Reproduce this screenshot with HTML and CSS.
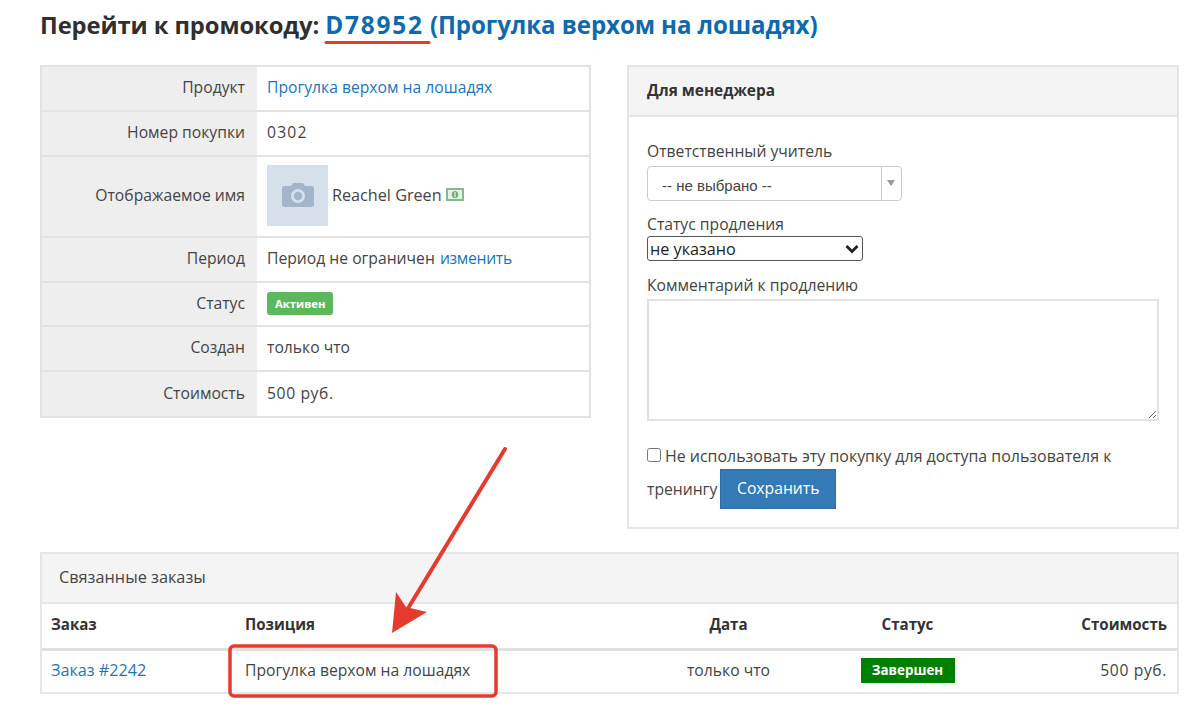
FILE: index.html
```html
<!DOCTYPE html>
<html lang="ru">
<head>
<meta charset="utf-8">
<title>Покупка</title>
<link rel="stylesheet" href="styles.css">
</head>
<body>
<main class="page">
  <h1 class="title">Перейти к промокоду: <a href="#" class="code">D78952</a> <a href="#" class="title-name">(Прогулка верхом на лошадях)</a></h1>
  <div class="columns">
    <table class="info">
      <tr class="r45"><th>Продукт</th><td><a href="#">Прогулка верхом на лошадях</a></td></tr>
      <tr class="r45"><th>Номер покупки</th><td class="num">0302</td></tr>
      <tr class="r81"><th>Отображаемое имя</th><td>
        <div class="user">
          <div class="avatar">
            <svg width="32" height="24" viewBox="0 0 32 24"><path fill="#a3b5c8" d="M3 3h6l2-3h10l2 3h6a3 3 0 0 1 3 3v15a3 3 0 0 1-3 3H3a3 3 0 0 1-3-3V6a3 3 0 0 1 3-3z"/><circle cx="16" cy="13" r="7" fill="#d5e0eb"/><circle cx="16" cy="13" r="4.2" fill="#a3b5c8"/></svg>
          </div>
          <span class="name">Reachel Green</span>
          <svg class="money" width="18" height="13" viewBox="0 0 18 13"><rect width="18" height="13" fill="#86bd86"/><rect x="2" y="2" width="14" height="9" fill="#e8f3e8"/><ellipse cx="9" cy="6.5" rx="3.2" ry="3.6" fill="#6fae6f"/><rect x="8.4" y="4" width="1.2" height="5" fill="#e8f3e8"/></svg>
        </div>
      </td></tr>
      <tr class="r45"><th>Период</th><td>Период не ограничен <a href="#" class="change">изменить</a></td></tr>
      <tr class="r44"><th>Статус</th><td><span class="badge">Активен</span></td></tr>
      <tr class="r45"><th>Создан</th><td>только что</td></tr>
      <tr class="r46"><th>Стоимость</th><td class="num-soft">500 руб.</td></tr>
    </table>

    <section class="panel manager">
      <header class="panel-head strong">Для менеджера</header>
      <form class="panel-body">
        <label class="lbl">Ответственный учитель</label>
        <div class="combo"><span class="combo-text">-- не выбрано --</span><span class="combo-arrow"></span></div>
        <label class="lbl lbl2">Статус продления</label>
        <select class="native"><option>не указано</option></select>
        <label class="lbl lbl3">Комментарий к продлению</label>
        <textarea class="area"></textarea>
        <div class="check-line"><input type="checkbox" class="check"><span>Не использовать эту покупку для доступа пользователя к</span></div>
        <div class="save-line"><span>тренингу</span><button type="button" class="save">Сохранить</button></div>
      </form>
    </section>
  </div>

  <section class="panel orders">
    <header class="panel-head">Связанные заказы</header>
    <table class="list">
      <thead><tr><th class="c1">Заказ</th><th class="c2">Позиция</th><th class="c3">Дата</th><th class="c4">Статус</th><th class="c5">Стоимость</th></tr></thead>
      <tbody><tr><td class="c1"><a href="#" class="order-link">Заказ #2242</a></td><td class="c2">Прогулка верхом на лошадях</td><td class="c3">только что</td><td class="c4"><span class="done">Завершен</span></td><td class="c5 num-soft">500 руб.</td></tr></tbody>
    </table>
  </section>
</main>
<svg class="marks" width="1200" height="721" viewBox="0 0 1200 721">
  <path d="M326 42.5H429" stroke="#e33b2e" stroke-width="3" stroke-linecap="round" fill="none"/>
  <path d="M505 449 L407 610" stroke="#e53b2f" stroke-width="4" stroke-linecap="round" fill="none"/>
  <path d="M392 633 L396 592 L406 607 L427 612 Z" fill="#e53b2f"/>
  <rect x="230" y="646" width="266" height="50" rx="4" fill="none" stroke="#e53b2f" stroke-width="3.5"/>
</svg>
</body>
</html>
```
FILE: styles.css
```css
* { box-sizing: border-box; }
html, body { margin: 0; padding: 0; background: #fff; }
body { font-family: "Open Sans", "Noto Sans", sans-serif; font-size: 15.7px; color: #444; height: 721px; overflow: hidden; }
a { color: #1d75b8; text-decoration: none; }
.page { padding: 0 21px 0 40px; }
.title { margin: 0; height: 65px; padding-top: 8px; font-size: 23.8px; line-height: 34px; font-weight: 700; color: #2f2f2f; letter-spacing: -0.1px; white-space: nowrap; }
.title a { color: #0f69ad; }
.code { font-size: 24.4px; letter-spacing: 1.8px; }
.title-name { font-size: 24.1px; }
.columns { display: grid; grid-template-columns: 551px 552px; column-gap: 36px; align-items: start; }

.info { width: 551px; border-collapse: collapse; border: 2px solid #e2e2e2; table-layout: fixed; }
.info tr { border-bottom: 2px solid #e2e2e2; }
.info th { width: 216px; background: #eee; font-weight: 400; text-align: right; padding: 0 12px 3px 0; color: #444; }
.info td { padding: 0 10px 3px; color: #444; }
.r45 { height: 45px; }
.r44 { height: 44px; }
.r46 { height: 46px; }
.r81 { height: 81px; }
.num { letter-spacing: 1.2px; }
.num-soft { letter-spacing: 0.6px; }
.change { letter-spacing: -0.3px; margin-left: 1px; }
.user { display: flex; align-items: center; gap: 4px; }
.avatar { width: 61px; height: 61px; background: #d5e0eb; display: flex; align-items: center; justify-content: center; }
.name { font-size: 16.2px; margin-left: 0; }
.money { margin-top: -2px; }
.badge { display: inline-block; background: #5cb85c; color: #fff; font-size: 11.3px; font-weight: 700; line-height: 23px; padding: 0 8px; border-radius: 3px; }

.panel { border: 2px solid #e6e6e6; background: #fff; }
.panel-head { background: #f4f4f4; border-bottom: 2px solid #e6e6e6; }
.manager { height: 464px; }
.manager .panel-head { height: 50px; line-height: 47px; padding-left: 18px; font-weight: 700; font-size: 15.4px; color: #333; }
.panel-body { padding: 23px 19px 0 18px; display: flex; flex-direction: column; align-items: flex-start; }
.lbl { line-height: 22px; height: 22px; }
.lbl2 { margin-top: 12px; }
.lbl3 { margin-top: 13px; }
.combo { margin-top: 4px; width: 255px; height: 35px; border: 1px solid #ccc; border-radius: 4px; display: flex; font-family: "Liberation Sans", sans-serif; font-size: 15px; color: #444; }
.combo-text { flex: 1; padding: 10px 0 0 14px; border-right: 1px solid #ccc; line-height: 18px; }
.combo-arrow { width: 19px; position: relative; }
.combo-arrow::after { content: ""; position: absolute; left: 5px; top: 13px; border: 4px solid transparent; border-top: 6px solid #999; border-bottom: 0; }
.native { margin-top: 1px; width: 216px; height: 25px; border: 1px solid #555; border-radius: 3px; font-family: "Open Sans", sans-serif; font-size: 16.2px; color: #222; padding: 0 0 0 2px; appearance: none; background: #fff url("data:image/svg+xml,%3Csvg xmlns='http://www.w3.org/2000/svg' width='14' height='10' viewBox='0 0 14 10'%3E%3Cpath d='M1.5 2 7 7.5 12.5 2' fill='none' stroke='%23222' stroke-width='2.8'/%3E%3C/svg%3E") no-repeat right 3px center; }
.area { margin-top: 3px; width: 512px; height: 122px; border: 2px solid #e2e2e2; background: #fff; display: block; }
.check-line { margin-top: 19px; display: flex; align-items: center; gap: 4px; height: 32px; font-size: 15.95px; white-space: nowrap; }
.check { width: 14px; height: 14px; margin: -2px 0 0; }
.save-line { margin-top: -3px; display: flex; align-items: center; gap: 3px; height: 40px; }
.save { width: 116px; height: 40px; background: #337ab7; border: 1px solid #2e6da4; color: #fff; font: 400 15.7px "Open Sans", sans-serif; padding: 0 0 2px; }

.orders { margin-top: 23px; width: 1139px; height: 142px; }
.orders .panel-head { height: 50px; line-height: 46px; padding-left: 17px; font-size: 16.3px; }
.list { width: 100%; border-collapse: collapse; table-layout: fixed; }
.list thead tr { height: 45px; border-bottom: 3px solid #e0e0e0; }
.list tbody tr { height: 43px; }
.list th { font-weight: 700; color: #333; font-size: 15.1px; padding: 0 10px 4px 9px; }
.list td { padding: 0 10px 3px 9px; }
.order-link { font-size: 16.2px; }
.c1 { width: 194px; text-align: left; }
.c2 { width: 423px; text-align: left; }
.c3 { width: 140px; text-align: center; }
.c4 { width: 218px; text-align: center; }
.c5 { text-align: right; }
.done { display: inline-block; background: #008000; color: #fff; font-weight: 700; font-size: 13.4px; line-height: 25px; width: 94px; text-align: center; vertical-align: middle; margin-top: 2px; }

.marks { position: absolute; left: 0; top: 0; pointer-events: none; }
```
